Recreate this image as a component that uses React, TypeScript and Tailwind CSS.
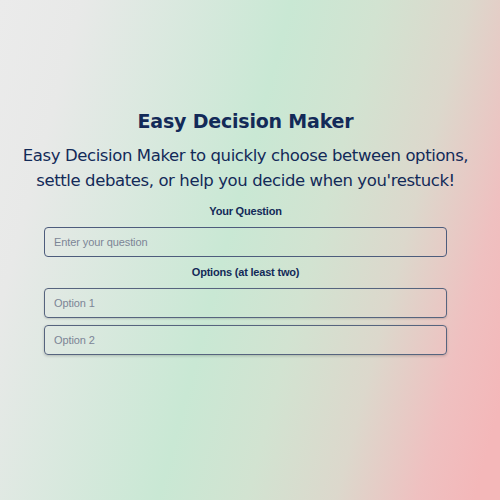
import React from "react";

export default function App() {
  return (
    <div
      className="w-[500px] h-[500px] overflow-hidden flex flex-col items-center pr-[9px]"
      style={{
        background:
          "linear-gradient(105deg, #ebebeb 0%, #e8e9e8 13%, #c9e8d4 46%, #d2e3d1 60%, #dcd8cc 74%, #efc0c0 87%, #f4b7b9 96%)",
      }}
    >
      <h1 className="mt-[107px] text-[19px] leading-[28px] font-bold text-[#132a58] [font-family:'DejaVu_Sans',sans-serif] tracking-[-0.2px]">
        Easy Decision Maker
      </h1>
      <p className="mt-[8px] text-center text-[16.5px] leading-[25px] text-[#132a58] [font-family:'DejaVu_Sans',sans-serif] tracking-[-0.4px]">
        Easy Decision Maker to quickly choose between options,
        <br />
        settle debates, or help you decide when you'restuck!
      </p>
      <div className="mt-[11px] w-[403px] flex flex-col items-center [font-family:'Liberation_Sans',Arial,sans-serif]">
        <label className="text-[11px] leading-[14px] font-bold text-[#132a58] tracking-[-0.2px]">Your Question</label>
        <input
          className="mt-[9px] w-full h-[30px] rounded-[4px] border-[1.5px] border-[#4d5c7c] bg-transparent px-[9px] text-[11px] tracking-[-0.1px] text-[#132a58] placeholder:text-[#7c8596] outline-none"
          placeholder="Enter your question"
        />
        <label className="mt-[8px] text-[11px] leading-[14px] font-bold text-[#132a58] tracking-[-0.2px]">Options (at least two)</label>
        <input
          className="mt-[9px] w-full h-[30px] rounded-[4px] border-[1.5px] border-[#56647e] bg-transparent px-[9px] text-[11px] tracking-[-0.1px] text-[#132a58] placeholder:text-[#7c8596] outline-none shadow-[0_1px_2px_rgba(0,0,0,0.15)]"
          placeholder="Option 1"
        />
        <input
          className="mt-[7px] w-full h-[30px] rounded-[4px] border-[1.5px] border-[#56647e] bg-transparent px-[9px] text-[11px] tracking-[-0.1px] text-[#132a58] placeholder:text-[#7c8596] outline-none shadow-[0_1px_3px_rgba(0,0,0,0.2)]"
          placeholder="Option 2"
        />
      </div>
    </div>
  );
}
